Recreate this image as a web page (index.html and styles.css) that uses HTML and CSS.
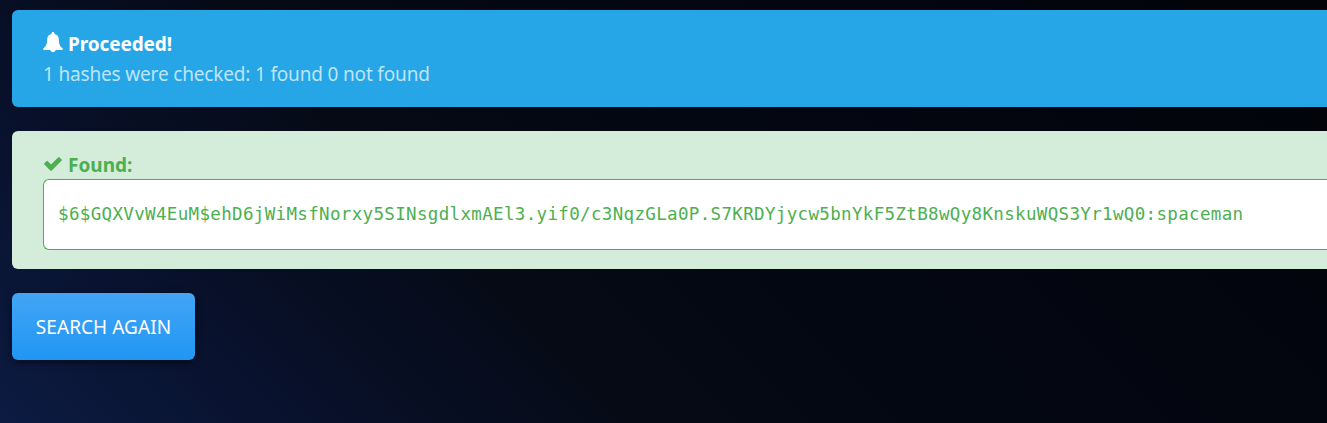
FILE: index.html
```html
<!DOCTYPE html>
<html lang="en">
<head>
<meta charset="utf-8">
<title>Search results</title>
<link rel="stylesheet" href="styles.css">
</head>
<body>
<main class="results">
  <section class="alert alert-info">
    <div class="alert-title">
      <svg class="icon icon-bell" viewBox="0 0 20 21"><path fill="currentColor" d="M10 0c.9 0 1.500.7 1.500 1.600v.5c2.800.7 4.200 2.500 4.300 5.200.2 5 1 6.900 3.500 8.700.9.800.600 2-.6 2H12.800A2.900 2.900 0 0 1 7.200 18H1.300c-1.200 0-1.500-1.200-.6-2 2.500-1.800 3.300-3.700 3.500-8.700.1-2.700 1.500-4.500 4.300-5.200v-.5C8.500.7 9.100 0 10 0Z"/></svg>
      <strong class="label-proceeded">Proceeded!</strong>
    </div>
    <div class="summary">1 hashes were checked: 1 found 0 not found</div>
  </section>
  <section class="alert alert-success">
    <div class="alert-title">
      <svg class="icon icon-check" viewBox="0 0 18 14"><path fill="currentColor" d="M.4 6.200 2.400 4.200q.7-.7 1.400 0L7 7.400 14.100.4q.7-.7 1.400 0l2 1.900q.7.700 0 1.400l-9.700 9.700q-.8.800-1.600 0L.4 7.600q-.7-.7 0-1.400Z"/></svg>
      <strong class="label-found">Found:</strong>
    </div>
    <div class="hash-box">$6$GQXVvW4EuM$ehD6jWiMsfNorxy5SINsgdlxmAEl3.yif0/c3NqzGLa0P.S7KRDYjycw5bnYkF5ZtB8wQy8KnskuWQS3Yr1wQ0:spaceman</div>
  </section>
  <button class="button" type="button">SEARCH AGAIN</button>
</main>
</body>
</html>
```
FILE: styles.css
```css
* {
  box-sizing: border-box;
}

html {
  height: 100%;
}

body {
  margin: 0;
  height: 100%;
  overflow: hidden;
  font-family: "Noto Sans", "Open Sans", sans-serif;
  font-size: 19px;
  line-height: 30px;
  background: linear-gradient(45deg, #0c1b42 0, #081029 250px, #050a14 465px, #040812 600px, #030610 850px, #020409 100%);
}

.results {
  display: flex;
  flex-direction: column;
  align-items: flex-start;
  gap: 24px;
  padding: 10px 0 0 12px;
}

.alert {
  width: 100%;
  border-radius: 6px 0 0 6px;
  padding-left: 31px;
}

.alert-info {
  height: 97px;
  padding-top: 19px;
  background: #26a6e6;
  color: #fff;
}

.alert-success {
  height: 138px;
  padding-top: 18px;
  background: #d4edda;
  color: #4caf50;
}

.alert-title {
  display: flex;
  height: 30px;
}

.label-proceeded {
  letter-spacing: -0.1px;
}

.label-found {
  padding-top: 1px;
}

.icon {
  flex: none;
}

.icon-bell {
  width: 20px;
  height: 21px;
  margin: 3px 5px 0 0;
}

.icon-check {
  width: 18px;
  height: 14px;
  margin: 8px 6px 0 1px;
}

.summary {
  color: #bee4f8;
  letter-spacing: -0.17px;
}

.hash-box {
  height: 71px;
  padding: 19px 0 0 14px;
  border: 1px solid #4caf50;
  border-right: 0;
  border-radius: 6px 0 0 6px;
  background: #fff;
  font-family: "DejaVu Sans Mono", monospace;
  font-size: 17.5px;
  letter-spacing: 0.34px;
  white-space: nowrap;
}

.button {
  width: 183px;
  height: 67px;
  padding: 0;
  border: 0;
  border-radius: 6px;
  background: linear-gradient(#42a5f5, #2196f3);
  box-shadow: 0 2px 7px rgba(0, 0, 0, 0.6);
  color: #fff;
  font: inherit;
  letter-spacing: 0.06px;
  white-space: nowrap;
}
```
